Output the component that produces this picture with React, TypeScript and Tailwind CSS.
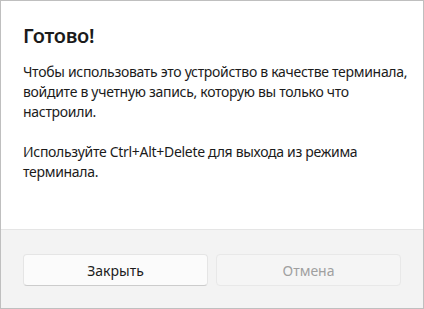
export default function App() {
  return (
    <div
      className="w-[424px] h-[309px] flex flex-col bg-white border border-[#bfbfbf] text-[#1b1b1b]"
      style={{ fontFamily: '"Noto Sans", "Open Sans", sans-serif' }}
    >
      {/* Content */}
      <div className="flex-1 px-[22px] pt-[21px]">
        <h1 className="text-[20px] leading-[28px] font-semibold tracking-[-0.3px]">Готово!</h1>
        <p className="mt-3 text-[14px] leading-[20px] tracking-[-0.3px] whitespace-nowrap">
          Чтобы использовать это устройство в качестве терминала,
          <br />
          войдите в учетную запись, которую вы только что
          <br />
          настроили.
        </p>
        <p className="mt-5 text-[14px] leading-[20px] tracking-[-0.3px] whitespace-nowrap">
          Используйте Ctrl+Alt+Delete для выхода из режима
          <br />
          терминала.
        </p>
      </div>

      {/* Footer */}
      <div className="h-[79px] shrink-0 bg-[#f3f3f3] border-t border-[#e5e5e5] px-[22px] pt-6 grid grid-cols-2 gap-2 items-start">
        <button className="h-8 rounded-[4px] bg-[#fbfbfb] border border-[#e5e5e5] border-b-[#cccccc] text-[14px] text-[#1b1b1b]">
          Закрыть
        </button>
        <button
          disabled
          className="h-8 rounded-[4px] bg-[#f5f5f5] border border-[#e8e8e8] text-[14px] text-[#a0a0a0]"
        >
          Отмена
        </button>
      </div>
    </div>
  );
}
